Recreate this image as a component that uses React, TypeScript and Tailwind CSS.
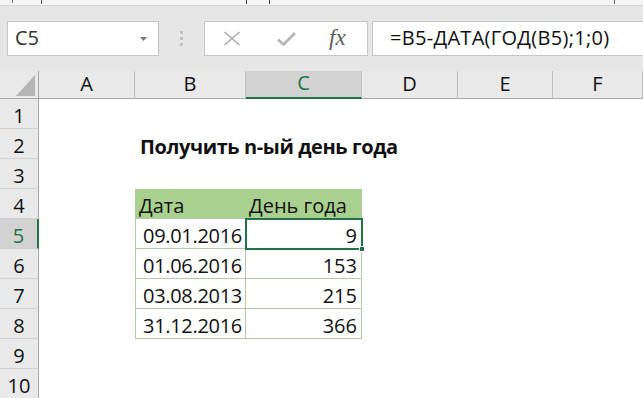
const cols = ["A", "B", "C", "D", "E", "F"];
const rows = [1, 2, 3, 4, 5, 6, 7, 8, 9, 10];

const data: Record<number, [string, string]> = {
  5: ["09.01.2016", "9"],
  6: ["01.06.2016", "153"],
  7: ["03.08.2013", "215"],
  8: ["31.12.2016", "366"],
};

const font = "font-['Open_Sans','Noto_Sans',sans-serif]";

function FormulaBar() {
  return (
    <div className="h-[71px] bg-[#e6e6e6] flex flex-col">
      <div className="h-[6px] bg-[#f4f4f4] border-b border-[#d6d6d6] flex items-start">
        <div className="ml-[12px] w-px h-[3px] bg-[#777]" />
        <div className="ml-[28px] w-px h-[4px] bg-[#555]" />
        <div className="ml-[204px] w-px h-[4px] bg-[#444]" />
        <div className="ml-[22px] w-px h-[4px] bg-[#444]" />
        <div className="ml-[344px] w-px h-[4px] bg-[#666]" />
      </div>
      <div className="flex items-start pt-[15px] pl-[7px]">
        <div className="w-[152px] h-[35px] bg-white border border-[#c6c6c6] flex items-center justify-between pl-[7px] pr-[11px]">
          <span className={`${font} text-[20px] leading-none text-[#333] pb-[1px]`}>C5</span>
          <svg width="7" height="4" viewBox="0 0 7 4">
            <path d="M0 0 L7 0 L3.5 4 Z" fill="#7a7a7a" />
          </svg>
        </div>
        <div className="w-[45px] h-[35px] flex flex-col items-center justify-center gap-[3px] pr-[1px]">
          <div className="w-[3px] h-[3px] bg-[#c2c2c2]" />
          <div className="w-[3px] h-[3px] bg-[#c2c2c2]" />
          <div className="w-[3px] h-[3px] bg-[#c2c2c2]" />
        </div>
        <div className="w-[164px] h-[35px] bg-white border border-[#c6c6c6] flex items-center pl-[18px]">
          <svg width="18" height="15" viewBox="0 0 18 15">
            <path d="M1.5 1 L16.5 14 M16.5 1 L1.5 14" stroke="#a8a8a8" strokeWidth="1.6" fill="none" />
          </svg>
          <svg className="ml-[36px]" width="19" height="14" viewBox="0 0 19 14">
            <path d="M1 7.5 L6.5 12.5 L18 1" stroke="#b6b6b6" strokeWidth="2.8" fill="none" />
          </svg>
          <span className="ml-[33px] font-['Liberation_Serif',serif] italic text-[23px] leading-none text-[#5c5c5c] pb-[3px]">
            fx
          </span>
        </div>
        <div className="ml-[4px] flex-1 h-[35px] bg-white border border-r-0 border-[#c6c6c6] flex items-center pl-[17px]">
          <span className={`${font} text-[20px] leading-none text-[#111] pb-[1px] tracking-[0.3px]`}>
            =B5-ДАТА(ГОД(B5);1;0)
          </span>
        </div>
      </div>
    </div>
  );
}

function bodyCell(r: number, c: string) {
  const base = `h-[30px] flex items-end pb-[2px] ${font} text-[20px] leading-[20px] text-[#111] whitespace-nowrap overflow-visible`;
  if (r === 2 && c === "B") {
    return (
      <div key={c} className={`${base} pl-[5px] font-bold relative z-10 text-[18px] tracking-[-0.4px]`}>
        Получить n-ый день года
      </div>
    );
  }
  if (r === 4 && c === "B") {
    return (
      <div key={c} className={`${base} bg-[#a9d08e] border-l border-b border-[#b7c8a7] pl-[3px]`}>
        Дата
      </div>
    );
  }
  if (r === 4 && c === "C") {
    return (
      <div key={c} className={`${base} bg-[#a9d08e] border-r border-b border-[#b7c8a7] pl-[3px]`}>
        День года
      </div>
    );
  }
  if (data[r] && c === "B") {
    return (
      <div key={c} className={`${base} border-l border-r border-b border-[#b7c8a7] pl-[7px] tracking-[-0.3px]`}>
        {data[r][0]}
      </div>
    );
  }
  if (data[r] && c === "C") {
    const selected = r === 5;
    return (
      <div
        key={c}
        className={`${base} relative justify-end border-r border-b border-[#b7c8a7] pr-[4px] ${
          selected ? "outline-2 outline-[#217346] -outline-offset-1 z-10" : ""
        }`}
      >
        {data[r][1]}
        {selected && (
          <div className="absolute right-[-4px] bottom-[-4px] w-[6px] h-[6px] bg-[#217346] border border-white" />
        )}
      </div>
    );
  }
  return <div key={c} className="h-[30px]" />;
}

export default function App() {
  return (
    <main className="w-[643px] h-[398px] overflow-hidden bg-white">
      <FormulaBar />
      <div className="grid grid-cols-[39px_96px_111px_116px_96px_95px_1fr] grid-rows-[28px_repeat(10,30px)]">
        <div className="bg-[#e9e9e9] border-r border-b border-[#a8a8a8] flex items-end justify-end pr-[3px] pb-[2px]">
          <svg width="19" height="21" viewBox="0 0 19 21">
            <path d="M19 0 L19 21 L0 21 Z" fill="#b5b5b5" />
          </svg>
        </div>
        {cols.map((c) => {
          const sel = c === "C";
          return (
            <div
              key={c}
              className={`flex items-end justify-center pb-[4px] ${font} text-[20px] leading-[20px] ${
                sel
                  ? "bg-[#d2d2d2] text-[#217346] border-r border-[#c0c0c0] border-b-2 border-b-[#217346]"
                  : "bg-[#e9e9e9] text-[#111] border-r border-b border-[#c0c0c0] border-b-[#a8a8a8]"
              }`}
            >
              {c}
            </div>
          );
        })}
        {rows.map((r) => {
          const sel = r === 5;
          return [
            <div
              key={`h${r}`}
              className={`flex items-end justify-center pb-[2px] ${font} text-[20px] leading-[20px] ${
                sel
                  ? "bg-[#d2d2d2] text-[#217346] border-b border-[#d0d0d0] border-r-2 border-r-[#217346]"
                  : "bg-[#e9e9e9] text-[#111] border-b border-[#d0d0d0] border-r border-r-[#a8a8a8]"
              }`}
            >
              {r}
            </div>,
            ...cols.map((c) => bodyCell(r, c)),
          ];
        })}
      </div>
    </main>
  );
}
